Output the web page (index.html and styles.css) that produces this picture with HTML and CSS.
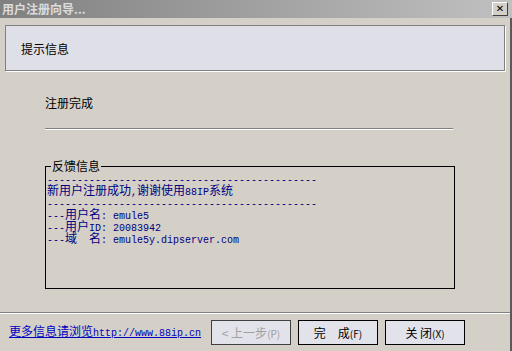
FILE: index.html
```html
<!DOCTYPE html>
<html lang="zh-CN">
  <head>
    <meta charset="UTF-8" />
    <meta name="viewport" content="width=device-width, initial-scale=1.0" />
    <title>用户注册向导</title>
    <link rel="stylesheet" href="styles.css">
  </head>
  <body>
    <div class="window">
      <div class="titlebar">
        <span class="title">用户注册向导...</span>
        <span class="close-btn">✕</span>
      </div>

      <div class="dialog">
        <div class="header">
          <span>提示信息</span>
        </div>

        <div class="content">
          <div class="step">注册完成</div>
          <div class="rule"></div>

          <fieldset class="feedback">
            <legend>反馈信息</legend>
            <div class="log">
              <div class="line"><span class="mono">---------------------------------------------</span></div>
              <div class="line">新用户注册成功<span class="mono">,</span>谢谢使用<span class="mono">88IP</span>系统</div>
              <div class="line"><span class="mono">---------------------------------------------</span></div>
              <div class="line"><span class="mono">---</span>用户名<span class="mono">: emule5</span></div>
              <div class="line"><span class="mono">---</span>用户<span class="mono">ID: 20083942</span></div>
              <div class="line"><span class="mono">---</span>域　名<span class="mono">: emule5y.dipserver.com</span></div>
            </div>
          </fieldset>
        </div>

        <div class="footer">
          <a class="more-link" href="#">更多信息请浏览<span class="mono">http://www.88ip.cn</span></a>
          <div class="buttons">
            <button class="btn" disabled>&lt; 上一步<span class="key">(P)</span></button>
            <button class="btn">完　成<span class="key">(F)</span></button>
            <button class="btn">关 闭<span class="key">(X)</span></button>
          </div>
        </div>
      </div>
    </div>
  </body>
</html>
```

FILE: styles.css
```css
* {
  box-sizing: border-box;
}

body {
  margin: 0;
  background-color: #d4d0c8;
  font-family: "Noto Sans CJK SC", "Liberation Sans", sans-serif;
  font-size: 12px;
  color: #000;
}

.window {
  width: 512px;
  height: 351px;
  display: flex;
  flex-direction: column;
}

.titlebar {
  height: 18px;
  display: flex;
  align-items: center;
  justify-content: space-between;
  padding: 0 4px 0 2px;
  background: linear-gradient(to right, #808080, #c0c0c0);
}

.title {
  color: #dcdcdc;
  font-weight: bold;
  font-size: 12px;
  line-height: 18px;
}

.close-btn {
  width: 16px;
  height: 14px;
  display: flex;
  align-items: center;
  justify-content: center;
  background-color: #d4d0c8;
  border-top: 1px solid #fff;
  border-left: 1px solid #fff;
  border-right: 1px solid #404040;
  border-bottom: 1px solid #404040;
  font-family: "DejaVu Sans", sans-serif;
  font-size: 10px;
  font-weight: bold;
  line-height: 1;
}

.dialog {
  flex: 1;
  display: flex;
  flex-direction: column;
  border-right: 2px solid #5a5a5a;
}

.header {
  height: 46px;
  margin: 7px 5px 0 5px;
  padding-left: 15px;
  display: flex;
  align-items: center;
  background-color: #dfdfe7;
  border: 1px solid #808080;
  box-shadow: 1px 1px 0 #fff;
}

.content {
  padding-left: 45px;
}

.step {
  margin-top: 26px;
  line-height: 12px;
}

.rule {
  width: 408px;
  height: 2px;
  margin-top: 19px;
  border-top: 1px solid #808080;
  border-bottom: 1px solid #fff;
}

.feedback {
  width: 410px;
  margin: 30px 0 0 0;
  padding: 0 0 0 1px;
  border: 1px solid #000;
}

.feedback legend {
  margin-left: 4px;
  padding: 0 1px;
  line-height: 12px;
}

.log {
  height: 116px;
  color: #000080;
}

.line {
  height: 12px;
  line-height: 12px;
  white-space: pre;
}

.mono {
  font-family: "Liberation Mono", monospace;
  font-size: 10px;
}

.footer {
  margin-top: auto;
  height: 39px;
  display: flex;
  align-items: center;
  padding: 6px 45px 6px 9px;
  border-top: 1px solid #808080;
  box-shadow: inset 0 1px 0 #fff;
}

.more-link {
  color: #0000c0;
  text-decoration: underline;
  line-height: 14px;
}

.buttons {
  margin-left: auto;
  display: flex;
  gap: 7px;
}

.btn {
  width: 80px;
  height: 25px;
  padding: 0;
  background-color: #e2e2ea;
  border: 1px solid #000;
  font-family: "Noto Sans CJK SC", sans-serif;
  font-size: 12px;
  color: #000;
}

.btn:disabled {
  color: #a0a0a0;
  border-color: #404040;
}

.key {
  font-size: 10px;
}
```
